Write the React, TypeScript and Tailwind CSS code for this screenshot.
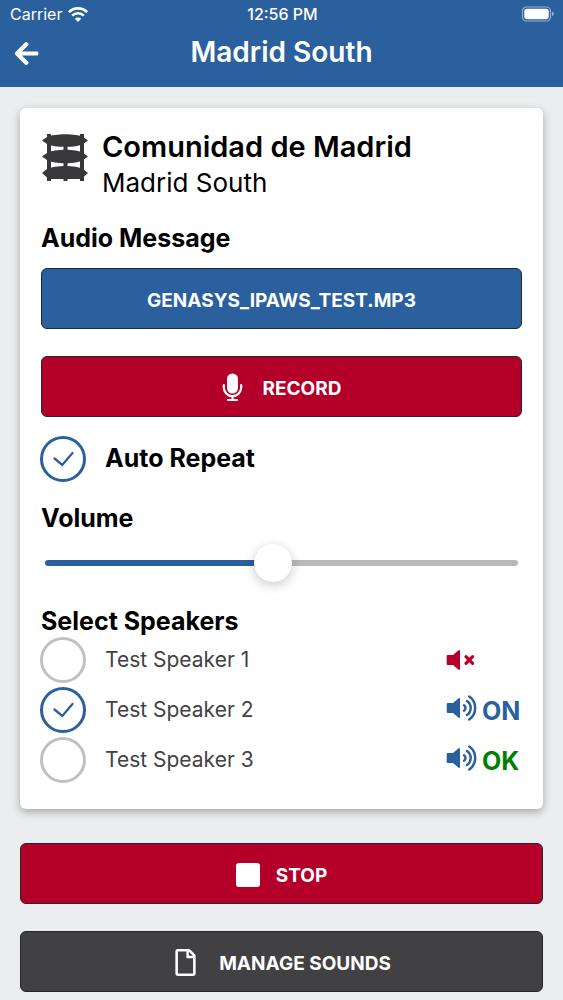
import { useState } from 'react'
import clsx from 'clsx'
import { FaArrowLeft, FaRegFile } from 'react-icons/fa'

type SpeakerStatus = 'muted' | 'on' | 'ok'

interface Speaker {
  id: string
  name: string
  status: SpeakerStatus
}

const SPEAKERS: Speaker[] = [
  { id: 'speaker-1', name: 'Test Speaker 1', status: 'muted' },
  { id: 'speaker-2', name: 'Test Speaker 2', status: 'on' },
  { id: 'speaker-3', name: 'Test Speaker 3', status: 'ok' },
]

function WifiIcon() {
  return (
    <svg width="20" height="15" viewBox="0 0 20 15" fill="none" stroke="white" strokeWidth="2.6" aria-hidden="true">
      <path d="M0.9 5.1a13 13 0 0 1 18.2 0" />
      <path d="M4.2 8.6a8.3 8.3 0 0 1 11.6 0" />
      <path d="M10 15 6.8 11.7a4.6 4.6 0 0 1 6.4 0Z" fill="white" stroke="none" />
    </svg>
  )
}

function BatteryIcon() {
  return (
    <svg width="34" height="16" viewBox="0 0 34 16" aria-hidden="true">
      <rect x="1.5" y="1" width="28" height="14" rx="4" fill="none" stroke="white" strokeOpacity="0.5" strokeWidth="1.2" />
      <rect x="3.3" y="2.8" width="24.4" height="10.4" rx="2.4" fill="white" />
      <path d="M31.2 5.8c2 .6 2 3.8 0 4.4Z" fill="white" fillOpacity="0.6" />
    </svg>
  )
}

function SirenIcon() {
  return (
    <svg width="48" height="50" viewBox="0 0 48 50" fill="#38383a" className="shrink-0" aria-hidden="true">
      <path d="M6 1h4v47H6zM39 1h4v47h-4zM22.500 4h4v44h-4zM6 44h37v2H6z" />
      <path d="M1 7.500 6 4C14 .2 35 .2 42 4l5 3.500-5 3.500C35 14.800 14 14.800 6 11Z" />
      <path d="M1 23.500 6 20c8-4.300 29-4.300 36 0l5 3.500-5 3.500c-7 4.300-28 4.300-36 0Z" />
      <path d="M1 40 6 36c8-4 29-4 36 0l5 4-5 4.500c-7 1.500-28 1.500-36 0Z" />
    </svg>
  )
}

function MicrophoneIcon() {
  return (
    <svg width="21" height="29" viewBox="0 0 21 29" fill="white" className="mb-1" aria-hidden="true">
      <rect x="5" y="0.500" width="11" height="20" rx="5.500" />
      <path
        d="M1.800 12v2.500a8.700 8.700 0 0 0 17.400 0V12M10.500 23.500v3M6 27h9"
        fill="none"
        stroke="white"
        strokeWidth="2.200"
        strokeLinecap="round"
      />
    </svg>
  )
}

function VolumeOffIcon() {
  return (
    <svg width="32" height="26" viewBox="0 0 32 26" fill="#b4002a" aria-hidden="true">
      <path d="M2 8H7l5.600-4.800c.6-.5 1.400-.1 1.400.8v18c0 .9-.8 1.300-1.400.8L7 18H2C1.200 18 .7 17.500.7 16.700V9.300C.7 8.500 1.200 8 2 8Z" />
      <path d="m20 9.700 6.600 6.600m0-6.600L20 16.300" stroke="#b4002a" strokeWidth="3.200" strokeLinecap="round" />
    </svg>
  )
}

function VolumeOnIcon() {
  return (
    <svg width="32" height="26" viewBox="0 0 32 26" fill="#2b609e" aria-hidden="true">
      <path d="M2 8H7l5.600-4.800c.6-.5 1.400-.1 1.400.8v18c0 .9-.8 1.300-1.400.8L7 18H2C1.200 18 .7 17.500.7 16.700V9.300C.7 8.500 1.200 8 2 8Z" />
      <g fill="none" stroke="#2b609e" strokeWidth="2.500" strokeLinecap="round">
        <path d="M18 10.300a3.200 3.200 0 0 1 0 5.400" />
        <path d="M21 6a8.500 8.500 0 0 1 0 14" />
        <path d="M23.300 1.600a14 14 0 0 1 0 22.800" />
      </g>
    </svg>
  )
}

interface RoundCheckboxProps {
  id: string
  checked: boolean
  onChange: (checked: boolean) => void
}

function RoundCheckbox({ id, checked, onChange }: RoundCheckboxProps) {
  return (
    <span className="grid shrink-0 -ml-px">
      <input
        id={id}
        type="checkbox"
        checked={checked}
        onChange={(e) => onChange(e.target.checked)}
        className="peer col-start-1 row-start-1 size-[46px] cursor-pointer appearance-none rounded-full border-3 border-[#c0c0c1] checked:border-[#2b609e]"
      />
      <svg
        viewBox="0 0 46 46"
        fill="none"
        stroke="#2b609e"
        strokeWidth="2.300"
        strokeLinecap="round"
        className="invisible pointer-events-none col-start-1 row-start-1 size-[46px] peer-checked:visible"
        aria-hidden="true"
      >
        <path d="m14.500 22.500 7.800 6.500L32.500 17" />
      </svg>
    </span>
  )
}

function StatusBadge({ status }: { status: SpeakerStatus }) {
  if (status === 'muted') return <VolumeOffIcon />
  return (
    <>
      <span className="pb-1"><VolumeOnIcon /></span>
      <span className={clsx('ml-1 pt-1 text-[25px] font-bold', status === 'on' ? 'text-[#2b609e]' : 'text-[#008000]')}>
        {status.toUpperCase()}
      </span>
    </>
  )
}

const buttonBase =
  'flex h-[61px] w-full cursor-pointer items-center justify-center rounded-md border border-[#24262e] pt-[6px] text-[19px] font-bold text-white'

export default function App() {
  const [autoRepeat, setAutoRepeat] = useState(true)
  const [volume, setVolume] = useState(48)
  const [selected, setSelected] = useState<string[]>(['speaker-2'])

  const toggleSpeaker = (id: string, checked: boolean) => {
    setSelected((prev) => (checked ? [...prev, id] : prev.filter((s) => s !== id)))
  }

  return (
    <div className="min-h-screen bg-[#ecedee] pb-2 font-['Inter','Open_Sans',sans-serif] text-black">
      <header className="bg-[#2b609e] pb-3 text-white">
        <div className="grid h-7 grid-cols-3 items-center pr-2 pl-[10px] text-base">
          <div className="flex items-center gap-[6px]">
            <span>Carrier</span>
            <WifiIcon />
          </div>
          <span className="text-center font-medium">12:56 PM</span>
          <span className="flex justify-end"><BatteryIcon /></span>
        </div>
        <div className="grid h-[47px] grid-cols-[48px_1fr_48px] items-center">
          <button aria-label="Back" className="flex cursor-pointer justify-center pt-1 pl-1">
            <FaArrowLeft size={27} />
          </button>
          <h1 className="text-center text-[28px] leading-9 font-semibold">Madrid South</h1>
        </div>
      </header>

      <main className="px-5 pt-[21px]">
        <section className="rounded-md bg-white px-[21px] pt-[21px] pb-6 shadow-[0_3px_9px_rgba(0,0,0,0.3)]">
          <div className="flex gap-[13px]">
            <div className="pt-1"><SirenIcon /></div>
            <div>
              <h2 className="text-[29px] leading-9 font-semibold">Comunidad de Madrid</h2>
              <p className="text-[26px] leading-9">Madrid South</p>
            </div>
          </div>

          <h3 className="mt-[19px] text-[25px] leading-9 font-bold">Audio Message</h3>
          <button className={clsx(buttonBase, 'mt-3 bg-[#2b609e]')}>GENASYS_IPAWS_TEST.MP3</button>
          <button className={clsx(buttonBase, 'mt-[27px] gap-5 bg-[#b40028]')}>
            <MicrophoneIcon />
            RECORD
          </button>

          <div className="mt-[19px] flex items-center gap-[19px]">
            <RoundCheckbox id="auto-repeat" checked={autoRepeat} onChange={setAutoRepeat} />
            <label htmlFor="auto-repeat" className="text-[25px] font-bold">Auto Repeat</label>
          </div>

          <label htmlFor="volume" className="mt-[18px] block text-[25px] leading-9 font-bold">Volume</label>
          <div className="mt-2 flex h-[38px] items-center px-1">
            <input
              id="volume"
              type="range"
              min={0}
              max={100}
              value={volume}
              onChange={(e) => setVolume(Number(e.target.value))}
              style={{ backgroundImage: `linear-gradient(to right, #2b609e ${volume}%, #b9b9bb ${volume}%)` }}
              className="h-[6px] w-full cursor-pointer appearance-none rounded-full [&::-webkit-slider-thumb]:size-[38px] [&::-webkit-slider-thumb]:appearance-none [&::-webkit-slider-thumb]:rounded-full [&::-webkit-slider-thumb]:bg-white [&::-webkit-slider-thumb]:shadow-[0_3px_12px_rgba(0,0,0,0.22)]"
            />
          </div>

          <h3 className="mt-[21px] pt-1 text-[25px] leading-7 font-bold">Select Speakers</h3>
          <ul>
            {SPEAKERS.map((speaker) => (
              <li key={speaker.id} className="flex h-[50px] items-center gap-[19px]">
                <RoundCheckbox
                  id={speaker.id}
                  checked={selected.includes(speaker.id)}
                  onChange={(checked) => toggleSpeaker(speaker.id, checked)}
                />
                <label htmlFor={speaker.id} className="flex-1 text-[21px] text-[#424244]">{speaker.name}</label>
                <div className="flex w-[76px] items-center">
                  <StatusBadge status={speaker.status} />
                </div>
              </li>
            ))}
          </ul>
        </section>

        <button className={clsx(buttonBase, 'mt-[34px] gap-4 bg-[#b40028]')}>
          <span className="mb-1 size-6 rounded-[3px] bg-white" />
          STOP
        </button>
        <button className={clsx(buttonBase, 'mt-[27px] gap-5 bg-[#414143]')}>
          <FaRegFile size={27} className="mb-1" />
          MANAGE SOUNDS
        </button>
      </main>
    </div>
  )
}
